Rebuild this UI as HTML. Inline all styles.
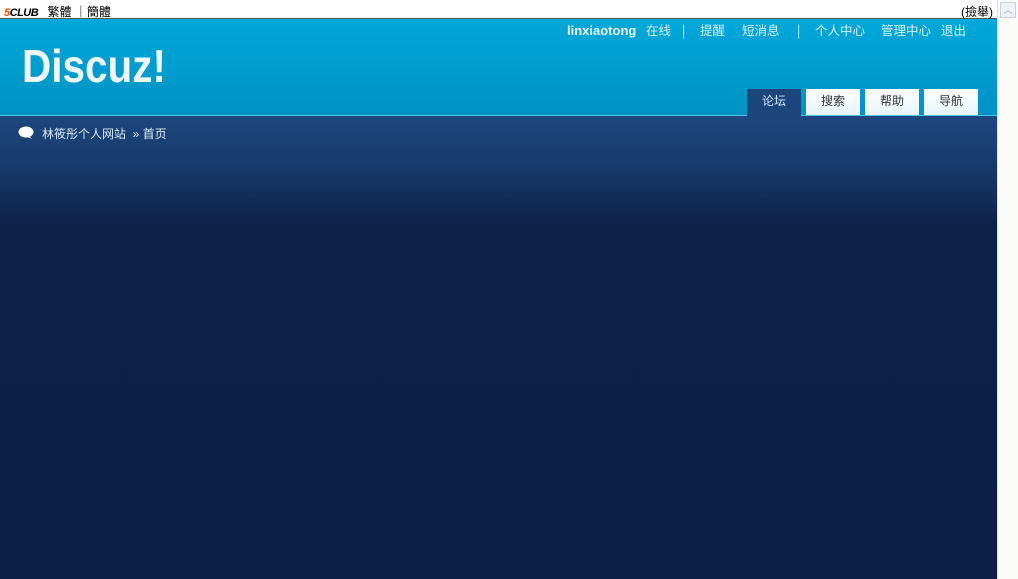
<!DOCTYPE html>
<html><head><meta charset="utf-8"><style>
*{margin:0;padding:0;box-sizing:border-box}
body{width:1018px;height:579px;overflow:hidden;background:#fff;font-family:"Liberation Sans","Noto Sans CJK SC",sans-serif;font-size:12px;position:relative}
#top{position:absolute;left:0;top:0;width:997px;height:19px;background:#fff;border-bottom:1px solid #555}
#top .l{position:absolute;left:4px;top:3px;font-size:12px;color:#000}
#top .l b{font-style:italic;color:#e05a00;font-size:11px;font-weight:900;margin-right:6px;letter-spacing:-0.5px}
#top .l b span{color:#000}
#top .r{position:absolute;right:4px;top:3px;color:#000}
#hd{position:absolute;left:0;top:19px;width:997px;height:97px;background:linear-gradient(#00a8d8,#0092c4);border-bottom:1px solid #49c3e8}
#logo{position:absolute;left:22px;top:20px;font-size:46px;font-weight:bold;color:#eef8fc;transform:scaleX(0.88);transform-origin:left top}
#um span{position:absolute;top:3px;height:16px;line-height:16px;color:#d4f1fb;font-size:12.5px;white-space:nowrap;font-family:"Noto Sans CJK SC",sans-serif}
#um span.u{font-family:"Liberation Sans",sans-serif;font-weight:bold;font-size:13px;color:#e8f7fc;top:4px}
#nav{position:absolute;top:70px;left:747px}
#nav a{position:absolute;top:0;width:54px;height:26px;line-height:25px;text-align:center;background:linear-gradient(#fff,#e6f4fa);color:#333;text-decoration:none}
#nav a.on{background:#1d467c;color:#cfe2f3;height:27px}
#bd{position:absolute;left:0;top:116px;width:997px;height:463px;background:linear-gradient(#1d477e 0px,#173a6c 50px,#0d2249 110px,#0c2048 463px)}
#bc{position:absolute;left:18px;top:9px;color:#dce8f5;font-size:12px}
#sb{position:absolute;right:0;top:0;width:21px;height:579px;background:#fbfbf9;border-left:1px solid #e0e0e0}
#sb .a{position:absolute;left:2px;top:2px;width:16px;height:16px;border:1px solid #c7cfdc;background:#eef2f8;color:#9aa;font-size:9px;text-align:center;line-height:14px}
</style></head><body>
<div id="top"><div class="l"><b>5<span>CLUB</span></b> 繁體 ｜簡體</div><div class="r">(撿舉)</div></div>
<div id="hd">
<div id="logo">Discuz!</div>
<div id="um"><span class="u" style="left:567px">linxiaotong</span><span style="left:646px">在线</span><span style="left:682px">|</span><span style="left:700px">提醒</span><span style="left:742px">短消息</span><span style="left:797px">|</span><span style="left:815px">个人中心</span><span style="left:881px">管理中心</span><span style="left:941px">退出</span></div>
<div id="nav"><a class="on" style="left:0">论坛</a><a style="left:59px">搜索</a><a style="left:118px">帮助</a><a style="left:177px">导航</a></div>
</div>
<div id="bd"><div id="bc"><svg width="16" height="14" viewBox="0 0 16 14" style="vertical-align:-2px;margin-right:8px"><ellipse cx="8" cy="6" rx="7.5" ry="5.5" fill="#fff"/><path d="M11 10 L14 13 L9 11 Z" fill="#fff"/></svg>林筱彤个人网站 &nbsp;» 首页</div></div>
<div id="sb"><div class="a">︿</div></div>
</body></html>
